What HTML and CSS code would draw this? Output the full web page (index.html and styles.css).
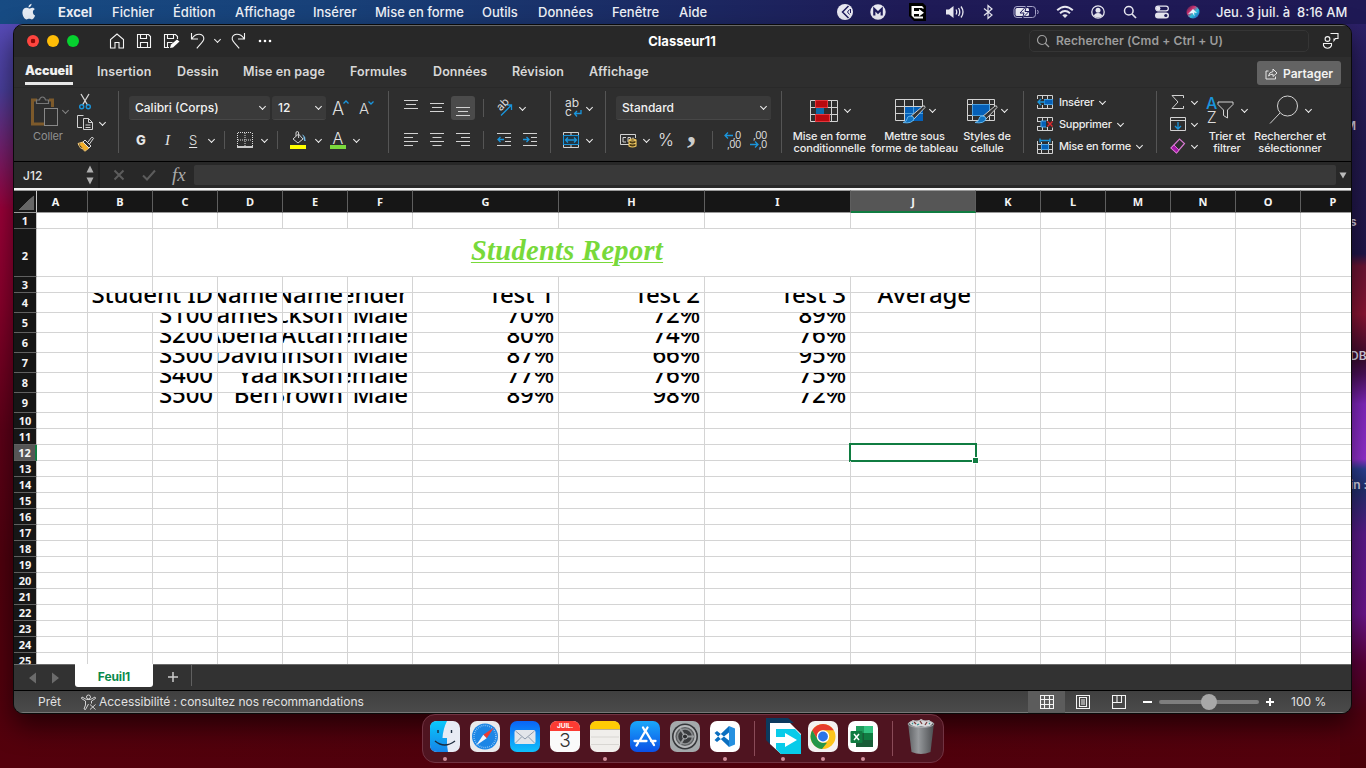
FILE: index.html
```html
<!DOCTYPE html>
<html lang="fr">
<head>
<meta charset="utf-8">
<title>Classeur11</title>
<link rel="stylesheet" href="styles.css">
</head>
<body>
<div class="desktop">
  <div class="wall-right"></div>
  <span class="desk-label l1">M</span><span class="desk-label l2">s</span><span class="desk-label l3">DB</span><span class="desk-label l4">in :</span>

  <header class="menubar">
    <svg class="apple" width="16" height="18" viewBox="0 0 16 18"><path fill="#e6ecf4" d="M10.6 0.8c.1 1.8-1.3 3.500-3.100 3.600C7.300 2.700 8.900 1 10.600.8zM13.700 6.200c-1.300.8-1.900 1.800-1.800 3.100 0 1.500.9 2.600 2.200 3.200-.5 1.500-1.700 3.800-3.200 3.900-1 0-1.400-.6-2.700-.6s-1.700.6-2.700.6C3.700 16.400 1.400 13 1.400 9.500c0-3 1.900-4.700 3.900-4.700 1.200 0 2 .7 2.900.7.900 0 1.800-.8 3.200-.8 1 0 1.800.5 2.300 1.500z"/></svg>
    <nav class="menus"><b>Excel</b><span>Fichier</span><span>Édition</span><span>Affichage</span><span>Insérer</span><span>Mise en forme</span><span>Outils</span><span>Données</span><span>Fenêtre</span><span>Aide</span></nav>
    <div class="tray">
      <svg width="18" height="18" viewBox="0 0 18 18"><circle cx="9" cy="9" r="8" fill="#e9e9f2"/><path d="M12.500 3L6.500 9l6 6" fill="none" stroke="#1f1c5c" stroke-width="1.500"/><path d="M13.500 6.500L11.500 9l2 2.500M14.500 6v4" fill="none" stroke="#1f1c5c" stroke-width="1"/></svg>
      <svg width="18" height="18" viewBox="0 0 18 18"><circle cx="9" cy="9" r="7.700" fill="#e9e9f2"/><path d="M5.300 12.500V6L9 9.600 12.700 6v6.500" fill="none" stroke="#1f1c5c" stroke-width="2.200"/></svg>
      <svg width="20" height="20" viewBox="0 0 20 20"><path d="M1 1h14l3 3v15H6l-5-5z" fill="#000"/><path d="M3.500 4H14l1.500 1.500V7l-2-1H6v3h5V7l5 3.700-5 3.800V12H6v2.500h9v2H6.500l-3-3z" fill="#fff"/></svg>
      <svg width="20" height="16" viewBox="0 0 20 16"><path d="M1 5.500h3L8.500 2v12L4 10.500H1z" fill="#e9e9f2"/><path d="M11 5.500q1.500 2.500 0 5M13.500 4q2.500 4 0 8M16 2.500q4 5.500 0 11" fill="none" stroke="#e9e9f2" stroke-width="1.300"/></svg>
      <svg width="12" height="16" viewBox="0 0 12 16"><path d="M2 4.500l8 6.500-4 3.500v-13L10 5l-8 6.500" fill="none" stroke="#e9e9f2" stroke-width="1.200"/></svg>
      <svg width="27" height="14" viewBox="0 0 27 14"><rect x="1" y="1.500" width="21.500" height="11" rx="3" fill="none" stroke="#a9a7cc" stroke-width="1"/><rect x="2.500" y="3" width="13.500" height="8" rx="1.500" fill="#e9e9f2"/><path d="M13.500 1L7 8h4l-1.500 5L16 6.500h-4z" fill="#e9e9f2" stroke="#1f1c5c" stroke-width="1"/><path d="M24.500 5q1.500 2 0 4" stroke="#a9a7cc" fill="none"/></svg>
      <svg width="18" height="14" viewBox="0 0 18 14"><path d="M1.200 5.200q7.800-7 15.600 0M4 8.200q5-4.400 10 0" fill="none" stroke="#e9e9f2" stroke-width="2"/><path d="M6.300 10.300q2.700-2 5.400 0L9 13z" fill="#e9e9f2"/></svg>
      <svg width="16" height="16" viewBox="0 0 16 16"><circle cx="8" cy="8" r="6.200" fill="none" stroke="#e9e9f2" stroke-width="1.300"/><circle cx="8" cy="6.200" r="2.500" fill="#e9e9f2"/><path d="M3.700 12q1-3 4.300-3t4.300 3Q8 15 3.700 12z" fill="#e9e9f2"/></svg>
      <svg width="14" height="14" viewBox="0 0 14 14"><circle cx="5.800" cy="5.800" r="4.300" fill="none" stroke="#e9e9f2" stroke-width="1.500"/><path d="M9 9l4 4" stroke="#e9e9f2" stroke-width="1.700"/></svg>
      <svg width="16" height="14" viewBox="0 0 16 14"><rect x="1.700" y="1.200" width="12.600" height="4.600" rx="2.300" fill="none" stroke="#e9e9f2" stroke-width="1.200"/><circle cx="4.200" cy="3.500" r="2.200" fill="#e9e9f2"/><rect x="1" y="7.500" width="14" height="6" rx="3" fill="#e9e9f2"/><circle cx="11.800" cy="10.500" r="1.600" fill="#1f1c5c"/></svg>
      <svg width="14" height="14" viewBox="0 0 14 14"><defs><linearGradient id="siri" x1="0" y1="0" x2="1" y2="1"><stop offset="0" stop-color="#14204a"/><stop offset=".35" stop-color="#d4306f"/><stop offset=".6" stop-color="#28c8e0"/><stop offset="1" stop-color="#2a3ab8"/></linearGradient></defs><circle cx="7" cy="7" r="6.500" fill="url(#siri)"/><path d="M2 9l5-5 4 4-3-.5.5 4-2-3.500z" fill="#e8f8ff"/></svg>
      <span class="clock">Jeu. 3 juil. à&nbsp; 8:16 AM</span>
    </div>
  </header>

  <main class="window">
    <div class="titlebar">
      <div class="lights"><i class="red"></i><i class="yellow"></i><i class="green"></i></div>
      <div class="quick">
        <svg width="16" height="16" viewBox="0 0 16 16"><path d="M1.500 15V6.500L8 1l6.500 5.500V15H10V9.500H6V15z" class="w"/></svg>
        <svg width="16" height="16" viewBox="0 0 16 16"><path d="M1.500 1.500h11l2 2v11h-13zM4.500 1.500v4h6v-4M4.500 14.500v-5h7v5" class="w"/></svg>
        <svg width="17" height="16" viewBox="0 0 17 16"><path d="M6 14.500H1.500v-13h11l2 2V6M4.500 1.500v4h6v-4M4.500 14.500v-5h5" class="w"/><path d="M7 15l1-3.500 6-5 2.500 2-6.500 6z" fill="#fff"/></svg>
        <svg width="16" height="18" viewBox="0 0 16 18"><path d="M1.500 1v6H8M2 6.500Q5 2 9.500 2.300 14 3 13.800 7c-.2 2.300-3 4.500-7 9.300" class="w"/></svg>
        <i class="chev"></i>
        <svg width="16" height="18" viewBox="0 0 16 18"><path d="M14.500 1v6H8M14 6.500Q11 2 6.500 2.300 2 3 2.200 7c.2 2.300 3 4.500 7 9.300" class="w"/></svg>
        <svg width="14" height="4" viewBox="0 0 14 4"><circle cx="2" cy="2" r="1.300" fill="#fff"/><circle cx="7" cy="2" r="1.300" fill="#fff"/><circle cx="12" cy="2" r="1.300" fill="#fff"/></svg>
      </div>
      <b class="doc">Classeur11</b>
      <div class="search"><svg width="14" height="14" viewBox="0 0 14 14"><circle cx="6" cy="6" r="4.500" fill="none" stroke="#a0a0a0" stroke-width="1.200"/><path d="M9 9l4 4" stroke="#a0a0a0" stroke-width="1.200"/></svg><span>Rechercher (Cmd + Ctrl + U)</span></div>
      <svg class="people" width="17" height="17" viewBox="0 0 17 17"><path d="M8.500 1.500h7.500v5h-2.500L12 8.500v-2M1.500 11.500h8v2q-1 2.700-4 2.700t-4-2.700z" class="w"/><circle cx="5.500" cy="7" r="2.400" class="w"/></svg>
    </div>

    <div class="tabs">
      <nav class="tablist"><b>Accueil</b><span>Insertion</span><span>Dessin</span><span>Mise en page</span><span>Formules</span><span>Données</span><span>Révision</span><span>Affichage</span></nav>
      <button class="share"><svg width="13" height="13" viewBox="0 0 13 13"><path d="M3.500 4H1v8h9.500V9.500M3.500 9q.5-4 4.500-4.500V2l4 4-4 3.500V7.200Q5.500 7 3.500 9z" fill="none" stroke="#e6e6e6"/></svg>Partager</button>
    </div>

    <section class="ribbon">
      <div class="group clip">
        <div class="paste">
          <div class="paste-top"><svg width="28" height="31" viewBox="0 0 28 31"><path d="M6 4H1.500v24H13M18 4h3.500v7" fill="none" stroke="#7d5a2b" stroke-width="3"/><path d="M5.500 7.500V4h3q.5-3 3-3t3 3h3v3.500z" fill="#2e2e2e" stroke="#777" stroke-width="1.200"/><rect x="13.500" y="12.500" width="13" height="17" fill="#2e2e2e" stroke="#888"/></svg><i class="chev dim"></i></div>
          <span>Coller</span>
        </div>
        <div class="clip-col">
          <svg width="16" height="18" viewBox="0 0 16 18"><path d="M4 1l6.500 11M12 1L5.500 12" stroke="#d8d8d8" stroke-width="1.300"/><circle cx="4.700" cy="13.700" r="2" fill="none" stroke="#1a95dc" stroke-width="1.400"/><circle cx="11.300" cy="13.700" r="2" fill="none" stroke="#1a95dc" stroke-width="1.400"/></svg>
          <div class="copy"><svg width="18" height="18" viewBox="0 0 18 18"><path d="M5 13.500H.5v-12h6M6.500 4.500h5l4 4v7h-9zM11.500 4.500v4h4M8.500 11h5M8.500 13.500h5" class="g"/></svg><i class="chev"></i></div>
          <svg width="18" height="16" viewBox="0 0 18 16"><path d="M2 8l4-2 6 6-4 3z" fill="#f2ad27"/><path d="M1 7.500l5-1.500 6 6-4 3.200Q6 14 5 12l-1 .5Q2.500 11 1 7.500z" fill="none" stroke="#f5cb78"/><path d="M6 6l2-2 6 6-2 2zM11 6l3.500-4.500q1.500-.5 2 .8L12.500 8" fill="#2e2e2e" stroke="#ddd"/></svg>
        </div>
      </div>

      <div class="group font">
        <div class="row r1"><div class="select">Calibri (Corps)<i class="chev"></i></div><div class="select">12<i class="chev"></i></div>
          <span class="ga big">A<svg width="6" height="4" viewBox="0 0 6 4"><path d="M.5 3.500L3 1l2.500 2.500" fill="none" stroke="#1a95dc" stroke-width="1.300"/></svg></span>
          <span class="ga">A<svg width="6" height="4" viewBox="0 0 6 4"><path d="M.5.5L3 3 5.500.5" fill="none" stroke="#1a95dc" stroke-width="1.300"/></svg></span></div>
        <div class="row r2"><b class="bold">G</b><span class="ital">I</span><span class="und">S</span><i class="chev"></i><i class="sep"></i>
          <svg width="16" height="16" viewBox="0 0 16 16"><path d="M1 .5h14M1 8h14M.5 1v13M8 1v13M15.500 1v13" stroke="#ddd" stroke-dasharray="1 1"/><path d="M0 15h16" stroke="#fff" stroke-width="1.600"/></svg><i class="chev"></i><i class="sep"></i>
          <svg width="17" height="18" viewBox="0 0 17 18"><path d="M3 8l5.500-5 4.500 5-5 4zM6 5V2q0-1.500 1.300-1.500T8.600 2v5" class="g"/><path d="M12.500 4q3 1 2.500 6-1.500-2-1-4" fill="#79bde8" stroke="#79bde8"/><path d="M0 14h16v4H0z" fill="#ff0"/></svg><i class="chev"></i>
          <span class="fontcolor">A</span><i class="chev"></i></div>
      </div>

      <div class="group align">
        <div class="row r3">
          <svg width="14" height="24" viewBox="0 0 14 24"><path d="M0 4.500h14M2 8.500h10M0 12.500h14" class="g"/></svg>
          <svg width="14" height="24" viewBox="0 0 14 24"><path d="M0 7.500h14M2 11.500h10M0 15.500h14" class="g"/></svg>
          <span class="on"><svg width="14" height="24" viewBox="0 0 14 24"><path d="M0 11.500h14M2 15.500h10M0 19.500h14" class="g"/></svg></span>
          <i class="sep"></i>
          <span class="orient"><em>ab</em><svg width="17" height="17" viewBox="0 0 17 17"><path d="M5 15.500L15.500 5M10.500 5h5v5" fill="none" stroke="#1a95dc" stroke-width="1.300"/></svg></span><i class="chev"></i></div>
        <div class="row r4">
          <svg width="14" height="14" viewBox="0 0 14 14"><path d="M0 .5h14M0 4.500h9M0 8.500h14M0 12.500h9" class="g"/></svg>
          <svg width="14" height="14" viewBox="0 0 14 14"><path d="M0 .5h14M2.500 4.500h9M0 8.500h14M2.500 12.500h9" class="g"/></svg>
          <svg width="14" height="14" viewBox="0 0 14 14"><path d="M0 .5h14M5 4.500h9M0 8.500h14M5 12.500h9" class="g"/></svg>
          <i class="sep"></i>
          <svg width="15" height="14" viewBox="0 0 15 14"><path d="M0 .5h14M8 4.500h6M8 8.500h6M0 12.500h14" class="g"/><path d="M7 6.500H1M3.500 4L1 6.500 3.500 9" class="bl"/></svg>
          <svg width="15" height="14" viewBox="0 0 15 14"><path d="M0 .5h14M8 4.500h6M8 8.500h6M0 12.500h14" class="g"/><path d="M0 6.500h6M3.500 4L6 6.500 3.500 9" class="bl"/></svg></div>
      </div>

      <div class="group wrap">
        <div class="row r5"><span class="abc">ab<br>c<svg width="9" height="8" viewBox="0 0 9 8"><path d="M8 0v3.500H1.500M4 1L1.500 3.500 4 6.500" class="bl"/></svg></span><i class="chev"></i></div>
        <div class="row r5"><svg width="16" height="16" viewBox="0 0 16 16"><path d="M.5.500h15v15H.5zM8 0v3.500M8 12.500V16" class="g"/><rect x=".5" y="3.500" width="15" height="9" fill="#22343f" stroke="#1a95dc"/><path d="M3 8h10M5 5.500L2.500 8 5 10.500M11 5.500L13.500 8 11 10.500" class="bl"/></svg><i class="chev"></i></div>
      </div>

      <div class="group number">
        <div class="row r6"><div class="select">Standard<i class="chev"></i></div></div>
        <div class="row r7">
          <svg width="18" height="16" viewBox="0 0 18 16"><path d="M9 12.500H.5v-10h15V6M6 5.500H3v4.500h3M8 10V5.500h2.500V8M13 5.500v2" class="g"/><path d="M9 8q3.500-2 7 0v6q-3.500 2-7 0zM9 8q3.500 2 7 0M9 11q3.500 2 7 0" fill="#4a3a14" stroke="#f5cb62" stroke-width="1.100"/></svg><i class="chev"></i>
          <span class="pct">%</span><span class="comma">,</span><i class="sep"></i>
          <span class="dec"><span><svg width="9" height="7" viewBox="0 0 9 7"><path d="M9 3.500H1M4 .5l-3 3 3 3" class="bl"/></svg>,0</span><span>,00</span></span>
          <span class="dec"><span>,00</span><span><svg width="9" height="7" viewBox="0 0 9 7"><path d="M0 3.500h8M5 .5l3 3-3 3" class="bl"/></svg>,0</span></span></div>
      </div>

      <div class="group styles">
        <div class="big-btn b1"><div class="big-ic"><svg width="29" height="27" viewBox="0 0 29 27"><path d="M.5 3.500h27v21H.5zM0 10.500h28M0 17.500h28M6.500 3v22M21.500 3v22" class="g"/><path d="M5.500 3.500h12v7h-12zM5.500 17.500h14v7h-14z" fill="#b8090f" stroke="#e4343a"/><path d="M6 11h8v6H6z" fill="#0b6aa8"/></svg><i class="chev"></i></div><span>Mise en forme<br>conditionnelle</span></div>
        <div class="big-btn b2"><div class="big-ic"><svg width="32" height="30" viewBox="0 -1 32 30"><path d="M.5 3.500h27v21H.5zM0 10.500h28M0 17.500h28M9.500 3v22M18.500 3v22" class="g"/><path d="M10 11h18v14H10z" fill="#0560b8"/><path d="M10 17.500h18M18.500 11v14" stroke="#4aa0e0"/><path d="M28 10q2-1 2 1.500L19 23l-4-2z" fill="#333" stroke="#ccc"/><path d="M15 20q4 0 4 3-2 5-11 3.500 4-1 4-3.500t3-3z" fill="#1173c0" stroke="#63b5ee"/></svg><i class="chev"></i></div><span>Mettre sous<br>forme de tableau</span></div>
        <div class="big-btn b3"><div class="big-ic"><svg width="32" height="30" viewBox="0 -1 32 30"><path d="M.5 3.500h27v21H.5zM0 8.500h28M0 19.500h28M5.500 3v22M22.500 3v22" class="g"/><path d="M5.500 8.500h17v11h-17z" fill="#0560b8" stroke="#4aa0e0"/><path d="M28 10q2-1 2 1.500L19 23l-4-2z" fill="#333" stroke="#ccc"/><path d="M15 20q4 0 4 3-2 5-11 3.500 4-1 4-3.500t3-3z" fill="#1173c0" stroke="#63b5ee"/></svg><i class="chev"></i></div><span>Styles de<br>cellule</span></div>
      </div>

      <div class="group cells">
        <div class="line"><svg width="16" height="14" viewBox="0 0 16 14"><path d="M.5 4V.5h15v13H.5V10M0 4.500h16M0 9.500h16M5.500 0v14M10.500 0v14" class="g"/><path d="M7 4.500h9v5H7z" fill="#0560b8" stroke="#4aa0e0"/><path d="M0 4h7v6H0z" fill="#2e2e2e"/><path d="M8 7H1.500M4 4L1 7l3 3" class="bl"/></svg>Insérer<i class="chev"></i></div>
        <div class="line"><svg width="16" height="14" viewBox="0 0 16 14"><path d="M.5 4V.500h15V4M.5 9.500v4h15v-3M0 4.500h5M0 9.500h5M5.500 0v14M10.500 0v14" class="g"/><path d="M4 4h6v6H4z" fill="#0560b8" stroke="#4aa0e0"/><path d="M9 4h7v6H9z" fill="#2e2e2e"/><path d="M10.500 4.500l5 5M15.500 4.500l-5 5" stroke="#e0282e" stroke-width="1.400"/></svg>Supprimer<i class="chev"></i></div>
        <div class="line"><svg width="16" height="16" viewBox="0 0 16 16"><path d="M.5 3v12.500h15V3M0 6.500h16M0 11.500h16M4.500 4v12M11.500 4v12" class="g"/><path d="M4.500 6.500h7v5h-7z" fill="#0560b8" stroke="#4aa0e0"/><path d="M3 2.500h10M3 .5v4M13 .5v4" class="bl"/></svg>Mise en forme<i class="chev"></i></div>
      </div>

      <div class="group edit">
        <div class="edit-col">
          <div><svg width="16" height="16" viewBox="0 0 16 16"><path d="M13.500 4V1.500H2L8 8l-6 6.500h11.500V12" class="g" stroke-width="1.300"/></svg><i class="chev"></i></div>
          <div><svg width="16" height="14" viewBox="0 0 16 14"><path d="M.5.500h15v13H.5zM0 3.500h16" class="g"/><path d="M8 5v7M5 9l3 3 3-3" class="bl"/></svg><i class="chev"></i></div>
          <div><svg width="16" height="16" viewBox="0 0 16 16"><path d="M1 10l8.500-9 5 4.500L6.500 15z" fill="none" stroke="#d678d0" stroke-width="1.200"/><path d="M1 10l3-3 5 5-2.500 3z" fill="#a51aa8" stroke="#d678d0"/></svg><i class="chev"></i></div>
        </div>
        <div class="big-btn b4"><div class="big-ic"><span class="az"><em>A</em><em>Z</em></span><svg width="17" height="18" viewBox="0 0 17 18"><path d="M1 1h15v2.500L10.500 9v8l-4-2.500V9L1 3.500z" class="g"/></svg><i class="chev"></i></div><span>Trier et<br>filtrer</span></div>
        <div class="big-btn b5"><div class="big-ic"><svg width="30" height="30" viewBox="0 0 30 30"><circle cx="18.500" cy="11" r="10" class="g"/><path d="M11 18L1 28.500" class="g" stroke-width="1.400"/></svg><i class="chev"></i></div><span>Rechercher et<br>sélectionner</span></div>
      </div>
    </section>

    <div class="formula">
      <span class="ref">J12</span>
      <svg width="8" height="20" viewBox="0 0 8 20"><path d="M.5 7.500L4 .5l3.500 7zM.5 12.500L4 19.500l3.500-7z" fill="#b0b0b0"/></svg>
      <i class="vbar"></i>
      <svg width="12" height="12" viewBox="0 0 12 12"><path d="M1.500 1.500l9 9M10.500 1.500l-9 9" stroke="#5c5c5c" stroke-width="2"/></svg>
      <svg width="14" height="12" viewBox="0 0 14 12"><path d="M1 6.500L5 10.500 13 1.500" fill="none" stroke="#5c5c5c" stroke-width="2"/></svg>
      <em class="fx">fx</em>
      <div class="input"></div>
      <svg class="drop" width="8" height="7" viewBox="0 0 8 7"><path d="M.5.500h7L4 6.500z" fill="#bbb"/></svg>
    </div>

    <section class="sheet" id="sheet"></section>

    <div class="sheetbar">
      <svg width="30" height="12" viewBox="0 0 30 12"><path d="M7 .5v11L0 6zM23 .5v11L30 6z" fill="#6b6b6b"/></svg>
      <div class="sheettab">Feuil1</div><div class="plus"><svg width="10" height="10" viewBox="0 0 10 10"><path d="M0 5h10M5 0v10" stroke="#ccc" stroke-width="1.500"/></svg></div>
    </div>
    <footer class="status">
      <span class="ready">Prêt</span>
      <svg width="16" height="16" viewBox="0 0 16 16"><circle cx="7.500" cy="3" r="2" class="g"/><path d="M1 3l4.500 2.500h4L14 3l.5 1.500L10.500 7v2.500M1 3L.5 4.500 4.500 7v4L3 15l1.500.5L7.500 10M9 10.500l5.500 5M14.500 10.500l-5.500 5" class="g"/></svg>
      <span class="access">Accessibilité : consultez nos recommandations</span>
      <span class="view on2"><svg width="14" height="14" viewBox="0 0 14 14"><path d="M.5.500h13v13H.5zM0 4.500h14M0 9.500h14M4.500 0v14M9.500 0v14" class="w"/></svg></span>
      <span class="view"><svg width="14" height="14" viewBox="0 0 14 14"><path d="M.5.500h13v13H.5zM3.500 2.500h7v9h-7zM5 5h4M5 7h4M5 9h4" class="w"/></svg></span>
      <span class="view"><svg width="14" height="14" viewBox="0 0 14 14"><path d="M.5.500h13v13H.5zM5 .5V7M.5 7.500h9v-7" class="w"/></svg></span>
      <i class="minus"></i><div class="slider"><i></i></div>
      <svg width="8" height="8" viewBox="0 0 8 8"><path d="M0 4h8M4 0v8" stroke="#fff" stroke-width="2"/></svg>
      <span class="zoom">100 %</span>
    </footer>
  </main>

  <div class="dock">
    <div class="app run"><svg width="30" height="31" viewBox="0 0 30 31"><defs><linearGradient id="fd" x1="0" y1="0" x2="0" y2="1"><stop offset="0" stop-color="#0ac8fb"/><stop offset="1" stop-color="#1584e8"/></linearGradient></defs><rect width="30" height="31" rx="7" fill="#e7ebf4"/><path d="M7 0h10q-4 8-4.500 17H17q-.5 7 1 14H7q-7 0-7-7V7q0-7 7-7z" fill="url(#fd)"/><path d="M8 9v3M21.500 9v3M5 20q9.500 8 20 0" fill="none" stroke="#1b2a3d" stroke-width="1.400"/></svg></div>
    <div class="app"><svg width="30" height="31" viewBox="0 0 30 31"><rect width="30" height="31" rx="7" fill="#e9eaec"/><circle cx="15" cy="15.500" r="13" fill="#1c86e6"/><circle cx="15" cy="15.500" r="11" fill="none" stroke="#a8d4f8" stroke-width="1.500" stroke-dasharray=".7 1.300"/><path d="M24 6.500L13.300 13.800l3.400 3.400z" fill="#ec3b32"/><path d="M6 24.500l7.300-10.700 3.400 3.400z" fill="#f4f6fa"/></svg></div>
    <div class="app"><svg width="30" height="31" viewBox="0 0 30 31"><defs><linearGradient id="ml" x1="0" y1="0" x2="0" y2="1"><stop offset="0" stop-color="#0a64f6"/><stop offset="1" stop-color="#0fc0fb"/></linearGradient></defs><rect width="30" height="31" rx="7" fill="url(#ml)"/><rect x="4.500" y="9" width="21" height="14" rx="2" fill="#e2e5ea"/><path d="M5.500 10l9.500 8 9.500-8M5.500 22l6-6M24.500 22l-6-6" fill="none" stroke="#8d9aab"/></svg></div>
    <div class="app cal"><b>JUIL.</b><span>3</span></div>
    <div class="app run"><svg width="30" height="31" viewBox="0 0 30 31"><rect width="30" height="31" rx="7" fill="#f0eeeb"/><path d="M7 0h16q7 0 7 7v1H0V7q0-7 7-7z" fill="#ffcb05"/><path d="M0 8.500h30" stroke="#b8b098"/><path d="M1 16h28M1 23.500h28" stroke="#d8d6d2"/></svg></div>
    <div class="app"><svg width="30" height="31" viewBox="0 0 30 31"><defs><linearGradient id="as" x1="0" y1="0" x2="0" y2="1"><stop offset="0" stop-color="#1aa8fa"/><stop offset="1" stop-color="#0b50e6"/></linearGradient></defs><rect width="30" height="31" rx="7" fill="url(#as)"/><path d="M13 6.500l2 3.500M17.500 6.500L9.500 20M4.500 20h12M16.500 11.500l7.500 12.500M21 20h4.500M8 22l-1.500 2.500" stroke="#fff" stroke-width="2.300" stroke-linecap="round"/></svg></div>
    <div class="app"><svg width="30" height="31" viewBox="0 0 30 31"><rect width="30" height="31" rx="7" fill="#a4a9ab"/><circle cx="15" cy="15.500" r="13" fill="#35373a"/><circle cx="15" cy="15.500" r="10.500" fill="#5c5f61" stroke="#b6b8ba" stroke-width="1.800"/><circle cx="15" cy="15.500" r="7.500" fill="#3b3d3f" stroke="#8b8e90" stroke-width="1.500"/><path d="M15 15.500h9.500M15 15.500L10.200 7.300M15 15.500l-4.800 8.200" stroke="#9a9d9f" stroke-width="1.800"/><circle cx="15" cy="15.500" r="2.500" fill="#2c2e30" stroke="#b0b2b4"/></svg></div>
    <div class="app run"><svg width="30" height="31" viewBox="0 0 30 31"><rect width="30" height="31" rx="7" fill="#fff"/><path d="M19 5l6 2.500v16L19 26z" fill="#2590e0"/><path d="M19 5v6.500L7 21l-2.500-2L17 7zM19 26v-6.500L7 10l-2.500 2L17 24z" fill="#0b6fc0"/></svg></div>
    <i class="dsep"></i>
    <div class="app run wide"><svg width="35" height="36" viewBox="0 0 35 36"><path d="M0 0h22l6 5H5v22L0 22z" fill="#0c3a5e"/><path d="M4 5h20l11 11v20H15L4 26z" fill="#fff"/><path d="M10 11h19l6 6v19H15l-5-5v-6h9v4l12-7-12-7v4h-9z" fill="#08cbe9"/></svg></div>
    <div class="app run"><svg width="30" height="31" viewBox="0 0 30 31"><rect width="30" height="31" rx="7" fill="#f4f2f2"/><circle cx="15" cy="15.500" r="12.500" fill="#fcc41c"/><path d="M4.200 9.300a12.500 12.500 0 0 1 21.600 0H15a6.200 6.200 0 0 0-5.400 3.100v6.200z" fill="#e63b2e"/><path d="M4.200 9.300L9.600 18.600A6.200 6.200 0 0 0 15 21.700h4L14 28A12.500 12.500 0 0 1 4.200 9.300z" fill="#23964a"/><circle cx="15" cy="15.500" r="6.200" fill="#fff"/><circle cx="15" cy="15.500" r="4.900" fill="#2b74e8"/></svg></div>
    <div class="app run xl"><svg width="30" height="31" viewBox="0 0 30 31"><rect width="30" height="31" rx="7" fill="#fff"/><path d="M8 5h9v21H8z" fill="#1f9d5d"/><path d="M16 5h9v7h-9z" fill="#33c481"/><path d="M16 12h9v7h-9z" fill="#107c41"/><path d="M8 12h8v14H8z" fill="#185c37"/><path d="M16 19h9v7h-9z" fill="#185c37"/><rect x="2.500" y="10" width="12" height="12" rx="1" fill="#107c41"/><path d="M6 13l5 6M11 13l-5 6" stroke="#fff" stroke-width="1.500"/></svg></div>
    <i class="dsep d2"></i>
    <div class="app trash"><svg width="28" height="36" viewBox="0 0 28 36"><defs><linearGradient id="tr"><stop offset="0" stop-color="#5f6164"/><stop offset=".4" stop-color="#96999c"/><stop offset="1" stop-color="#4b4d50"/></linearGradient></defs><path d="M1 4q13-4 26 0l-3.500 29q-9.500 4-19 0z" fill="url(#tr)"/><path d="M2 3.500L6 1l4 1.500L14 0l4 2 4-1 4 3-3 3-5 1-4-1-5 1-5-2z" fill="#d9dadc"/><path d="M7 3l2 2M13 2l2 3M20 3l-2 3" stroke="#7a3a3a" stroke-width="1.300"/><path d="M10 6l2-1M22 5l1-1M5 5l1-1" stroke="#2f8f90" stroke-width="1.300"/><ellipse cx="14" cy="5" rx="13" ry="3.500" fill="none" stroke="#aeb0b3" stroke-width=".8"/></svg></div>
  </div>
</div>
<script src="sheet.js"></script>
</body>
</html>
```
FILE: styles.css
```css
* { box-sizing: border-box; }
body { margin: 0; font-family: Inter, "Liberation Sans", sans-serif; font-size: 13px; color: #e6e6e6; }
svg { display: block; flex: none; }
.w { fill: none; stroke: #f4f4f4; stroke-width: 1.1; }
.g { fill: none; stroke: #d2d2d2; stroke-width: 1; }
.bl { fill: none; stroke: #1a95dc; stroke-width: 1.3; }
.chev { width: 5px; height: 5px; border: solid #f0f0f0; border-width: 0 1.8px 1.8px 0; transform: translateY(-1px) rotate(45deg); flex: none; }
.chev.dim { border-color: #858585; }
.sep { width: 1px; height: 18px; background: #555; }

.desktop { position: relative; width: 1366px; height: 768px; overflow: hidden;
  background: linear-gradient(90deg, rgba(0,0,0,0) 0, rgba(40,0,10,.15) 50%, rgba(0,0,0,0) 100%), linear-gradient(180deg, #564ab6 24px, #4a3f9c 90px, #75206d 150px, #9c0039 210px, #8a002c 300px, #5e0018 430px, #50000e 560px, #54000c 768px); }
.wall-right { position: absolute; left: 1340px; top: 24px; width: 26px; height: 744px;
  background: linear-gradient(180deg, #2c2068 0, #231a50 120px, #21164a 230px, #6c1433 242px, #8a1533 290px, #3a0c30 335px, #4a1058 350px, #8226c0 380px, #9330d0 435px, #2b3f94 445px, #21306e 465px, #5a1a8a 510px, #6c148c 590px, #5a0038 640px, #500010 690px, #4a0008 744px); }
.desk-label { position: absolute; font-size: 12px; font-weight: 600; color: #dcd8ea; white-space: nowrap; }
.l1 { left: 1345px; top: 118px; } .l2 { left: 1350px; top: 214px; } .l3 { left: 1350px; top: 348px; } .l4 { left: 1350px; top: 477px; }

.menubar { position: relative; height: 24px; display: flex; align-items: center; padding-left: 21px; background: linear-gradient(90deg, #174b83 0, #184078 25%, #1b2a63 48%, #1f1b57 66%, #1f1955 100%); color: #eef1f7; }
.menus { display: grid; grid-template-columns: 54px 61px 62px 78px 62px 107px 56px 74px 67px 60px; padding-left: 21px; font-weight: 500; white-space: nowrap; }
.menus b { font-weight: 700; }
.tray { margin-left: 97px; display: grid; align-items: center; grid-template-columns: 33px 39px 37px 37px 31px 43px 34px 33px 31px 32px 30px 140px; font-weight: 500; white-space: nowrap; }

.window { position: relative; margin-left: 13px; width: 1339px; height: 690px; border: 1px solid #0a0a0a; border-radius: 10px; overflow: hidden; background: #2e2e2e; box-shadow: 0 12px 26px rgba(0,0,0,.55); }
.titlebar { height: 32px; background: #282828; border-top: 1px solid #686868; display: flex; align-items: center; padding: 0 0 2px 13px; }
.lights { display: flex; gap: 8px; width: 81px; }
.lights i { width: 12px; height: 12px; border-radius: 50%; display: block; }
.red { background: radial-gradient(circle, #8c0a06 0 2px, #ff453f 2.6px); } .yellow { background: #ffbd07; } .green { background: #06d22f; }
.quick { display: grid; grid-template-columns: 27px 27px 27px 25px 15px 28px 20px; align-items: center; padding-left: 1px; width: 200px; }
.doc { width: 280px; margin-left: 234px; text-align: center; color: #fff; font-weight: 700; }
.search { width: 280px; height: 22px; margin-left: 207px; border: 1px solid #353535; border-radius: 5px; display: flex; align-items: center; padding-left: 6px; gap: 6px; color: #9c9c9c; font-weight: 600; font-size: 12px; letter-spacing: .1px; }
.people { margin-left: 13px; }

.tabs { height: 31px; display: flex; justify-content: space-between; padding: 0 10px 0 11px; border-bottom: 1px solid #292929; }
.tablist { display: grid; grid-template-columns: 72px 80px 66px 107px 83px 79px 77px 80px; align-items: center; font-size: 12.5px; font-weight: 600; color: #d8d8d8; justify-items: start; white-space: nowrap; margin-top: -1px; }
.tablist span { letter-spacing: .1px; }
.tablist b { color: #f0f0f0; border-bottom: 3px solid #e8e8e8; padding: 5px 0 4px; line-height: 15px; }
.share { margin-top: 4px; width: 84px; height: 24px; border: 0; border-radius: 3px; background: #636363; color: #f2f2f2; font: 600 12px Inter, sans-serif; display: flex; align-items: center; gap: 5px; padding: 0 0 0 8px; }

.ribbon { height: 74px; display: flex; border-bottom: 1px solid #000; }
.group { height: 73px; padding-top: 8px; display: flex; flex-direction: column; gap: 8px; flex: none; background: linear-gradient(#555,#555) right 0 top 3px / 1px 62px no-repeat; }
.row { height: 24px; display: grid; align-items: center; justify-items: start; }
.select { height: 24px; width: 100%; border-radius: 3px; background: #3a3a3a; border-bottom: 1px solid #474747; color: #f2f2f2; display: flex; align-items: center; justify-content: space-between; padding: 0 5px 0 6px; font-size: 12px; font-weight: 500; }
.clip { width: 105px; flex-direction: row; gap: 0; padding-left: 17px; }
.paste { width: 46px; font-size: 11px; color: #909090; }
.paste-top { display: flex; align-items: center; gap: 4px; height: 31px; }
.paste > span { display: block; margin: 2px 0 0 2px; letter-spacing: -.1px; }
.clip-col { display: flex; flex-direction: column; align-items: flex-start; margin-top: -3px; gap: 4px; }
.copy { display: flex; align-items: center; gap: 5px; margin-top: -1px; }
.font { width: 270px; padding-left: 10px; }
.r1 { column-gap: 2px; grid-template-columns: 141px 54px 28px 20px; }
.ga { font: 300 15px Inter; color: #ddd; display: flex; padding-left: 1px; } .ga svg { margin-top: 2px; margin-left: -1px; }
.ga.big { font-size: 18px; padding-left: 4px; }
.r2 { grid-template-columns: 31px 26px 18px 14px 13px 25px 15px 13px 26px 14px 24px 10px; padding-left: 6px; font-size: 14px; }
.bold { font-weight: 800; font-size: 13px; margin-left: 1px; } .ital { font: italic 15px "Liberation Serif"; margin-left: -1px; } .und { text-decoration: underline; text-underline-offset: 2px; font-weight: 300; margin-left: -3px; font-size: 13px; }
.r2 .und + .chev { margin-left: -1px; }
.fontcolor { font-size: 16px; line-height: 14px; width: 16px; height: 18px; text-align: center; border-bottom: 4px solid #7bd93c; font-weight: 300; }
.align { width: 162px; padding-left: 15px; }
.r3 { grid-template-columns: 26px 26px 27px 13px 24px 10px; } .r3 .on { margin-left: -5px; width: 24px; padding-left: 5px; border-radius: 3px; background: #4b4b4b; }
.orient { position: relative; width: 17px; height: 17px; } .orient em { position: absolute; left: 0; top: -3px; font: 11px Inter; transform: rotate(-45deg); color: #ddd; }
.r4 { grid-template-columns: 26px 26px 27px 14px 26px 15px; }
.wrap { width: 55px; padding-left: 12px; } .r5 { grid-template-columns: 24px 8px; }
.abc { font-size: 12px; line-height: 9px; color: #ddd; padding-left: 2px; } .abc svg { display: inline-block; vertical-align: -2px; margin-left: 1px; }
.number { width: 176px; padding-left: 10px; } .r6 { grid-template-columns: 155px; }
.r7 { grid-template-columns: 24px 14px 29px 25px 12px 26px 18px; grid-template-rows: 24px; padding-left: 4px; }
.pct { font: 300 17px Inter; } .comma { font: 700 36px/5px "Liberation Serif"; height: 24px; color: #ccc; }
.dec { font-size: 10px; line-height: 9px; width: 17px; display: flex; flex-direction: column; align-items: flex-end; letter-spacing: -.4px; color: #ddd; } .dec span { display: flex; align-items: center; }
.styles { width: 242px; padding: 8px 0 0 10px; flex-direction: row; gap: 0; }
.big-btn { text-align: center; font-size: 11px; line-height: 12px; font-weight: 500; letter-spacing: -.15px; color: #ececec; white-space: nowrap; display: flex; flex-direction: column; align-items: center; }
.big-ic { height: 28px; margin-bottom: 6px; display: flex; align-items: center; gap: 6px; align-self: flex-start; letter-spacing: 0; }
.b1 { width: 75px; } .b2 { width: 95px; } .b3 { width: 50px; }
.b1 .big-ic { padding-left: 18px; } .b2 .big-ic, .b3 .big-ic { gap: 3px; } .b2 .big-ic { padding-left: 28px; } .b3 .big-ic { padding-left: 5px; }
.cells { width: 133px; padding: 3px 0 0 13px; gap: 0; }
.line { height: 22px; display: flex; align-items: center; gap: 6px; font-size: 11px; font-weight: 500; letter-spacing: -.25px; color: #ececec; }
.edit { width: 194px; padding: 3px 0 0 13px; flex-direction: row; gap: 0; background: none; }
.edit-col { width: 35px; } .edit-col div { height: 22px; display: flex; align-items: center; gap: 6px; }
.edit .big-btn { padding-top: 5px; }
.b4 { width: 44px; } .b5 { width: 82px; } .b4 .big-ic { gap: 0; padding-left: 1px; } .b4 .chev { margin-left: 8px; }
.az em { display: block; font: 300 16px/14px Inter; color: #ddd; } .az em:first-child { color: #1a95dc; font-weight: 500; }
.b5 .big-ic { padding-left: 20px; gap: 7px; }

.formula { height: 26px; background: #282828; display: flex; align-items: center; padding-left: 9px; }
.ref { width: 63px; font-size: 12px; font-weight: 500; }
.vbar { width: 2px; height: 26px; background: #1f1f1f; margin: 0 13px 0 4px; } .formula .vbar + svg { margin-right: 17px; }
.fx { font: italic 19px "Liberation Serif"; color: #aaa; margin: 0 6px 0 16px; width: 16px; }
.input { height: 20px; width: 1142px; background: #393939; border-radius: 2px; } .formula .drop { margin-left: 3px; }

.sheet { height: 476px; overflow: hidden; background: #fff; border-top: 2px solid #f4f4f4; }
.srow { display: grid; grid-template-columns: 23px 51px repeat(5, 65px) 146px 146px 146px 125px repeat(6, 65px); }
.cell { border-right: 1px solid #d4d4d4; border-bottom: 1px solid #d4d4d4; overflow: hidden; position: relative; display: flex; justify-content: flex-end; color: #000; font: 500 24px/26px "Noto Sans", sans-serif; white-space: nowrap; }
.cell span { margin-top: -12px; padding-right: 4px; letter-spacing: -.1px; }
.rh, .ch { font: 700 11px "Noto Sans", sans-serif; color: #f4f4f4; background: #161616; display: flex; align-items: center; justify-content: center; overflow: hidden; }
.ch { border-right: 1px solid #5e5e5e; border-bottom: 1px solid #9a9a9a; border-top: 1px solid #999; }
.corner + .ch { padding-right: 13px; }
.rh { border-bottom: 1px solid #606060; border-right: 1px solid #c9c9c9; }
.rh.tall { padding-top: 6px; }
.ch.sel { background: #565656; border-bottom: 2px solid #107c41; } .rh.sel { background: #565656; border-right: 2px solid #107c41; }
.corner { background: linear-gradient(to bottom right, transparent 50%, #666 51%) 4px 4px / 16px 15px no-repeat #161616; border-top: 1px solid #999; border-right: 1px solid #c9c9c9; border-bottom: 1px solid #9a9a9a; }
.title { grid-column: span 8; justify-content: center; }
.title b { font: italic 700 28.5px/30px "Liberation Serif"; color: #78d93a; text-decoration: underline; text-decoration-thickness: 1px; text-underline-offset: 2px; margin: 7px 0 0 6px; letter-spacing: .3px; }
.active { position: relative; overflow: visible; }
.active::after { content: ""; position: absolute; inset: -2px -2px -2px -2px; border: 2px solid #107c41; }
.active::before { content: ""; position: absolute; right: -3px; bottom: -3px; width: 5px; height: 5px; background: #107c41; outline: 1px solid #fff; z-index: 2; }

.sheetbar { height: 27px; background: #323232; border-top: 1px solid #6a6a6a; border-bottom: 1px solid #000; display: flex; padding-left: 15px; }
.sheetbar > svg { width: 30px; margin: 7px 16px 0 0; }
.sheettab { width: 78px; height: 23px; margin-top: -1px; background: #fff; border-radius: 0 0 3px 3px; color: #0a8a4c; font-weight: 700; font-size: 12px; text-align: center; line-height: 25px; letter-spacing: -.1px; }
.plus { width: 39px; height: 21px; border-right: 1px solid #606060; display: flex; padding: 7px 0 0 15px; }
.status { height: 22px; display: flex; align-items: center; background: linear-gradient(#404040, #4a4a4a); border-bottom: 1px solid #777; font-size: 12px; color: #e2e2e2; }
.ready { margin-left: 24px; width: 43px; } .access { margin-left: 2px; width: 929px; letter-spacing: -.02px; white-space: nowrap; }
.view { width: 36px; height: 22px; display: grid; place-items: center; flex: none; } .on2 { background: #5c5c5c; width: 37px; }
.minus { width: 9px; height: 2px; background: #fff; margin: 0 7px 0 6px; flex: none; }
.slider { width: 100px; height: 4px; border-radius: 2px; background: #7e7e7e; position: relative; margin-right: 7px; flex: none; } .slider i { position: absolute; left: 42px; top: -6px; width: 16px; height: 16px; border-radius: 50%; background: #a8a8a8; }
.zoom { margin-left: 17px; white-space: nowrap; }

.dock { position: relative; margin: 0 0 0 422px; width: 522px; height: 49px; border: 1px solid #713342; border-radius: 13px; background: #4f1420; display: flex; gap: 10px; padding: 6px 0 0 7px; }
.app { position: relative; width: 30px; height: 31px; flex: none; }
.run::after { content: ""; position: absolute; left: 13px; top: 36px; width: 4px; height: 4px; border-radius: 50%; background: #d18e9b; }
.cal { border-radius: 7px; overflow: hidden; background: #fafafa; color: #333; text-align: center; display: flex; flex-direction: column; }
.cal b { background: #fb3b33; color: #fff; font-size: 6.500px; line-height: 10px; height: 10px; } .cal span { font-size: 19px; line-height: 20px; font-weight: 300; }
.dsep { width: 1px; height: 35px; background: #8a4b58; margin: 0 1px 0 4px; }
.dsep.d2 { margin: 0 4px 0 4px; }
.wide { width: 35px; margin: -3px -3px 0 0; } .wide::after { left: 15px; top: 39px; }
.trash { margin-top: -2px; }
```
FILE: sheet.js
```js
const columns = ['A','B','C','D','E','F','G','H','I','J','K','L','M','N','O','P'];
const heights = [16, 48, 16, 20, 20, 20, 20, 20, 20];
const values = {
  4: ['', 'Student ID', 'First Name', 'Last Name', 'Gender', 'Test 1', 'Test 2', 'Test 3', 'Average'],
  5: ['', '', 'S100', 'James', 'Jackson', 'Male', '70%', '72%', '89%'],
  6: ['', '', 'S200', 'Abena', 'Attah', 'Female', '80%', '74%', '76%'],
  7: ['', '', 'S300', 'David', 'Robinson', 'Male', '87%', '66%', '95%'],
  8: ['', '', 'S400', 'Yaa', 'Yankson', 'Female', '77%', '76%', '75%'],
  9: ['', '', 'S500', 'Ben', 'Brown', 'Male', '89%', '98%', '72%']
};
const sheet = document.getElementById('sheet');

function add(parent, cls, text) {
  const el = document.createElement('div');
  el.className = cls;
  if (text) el.innerHTML = text;
  parent.appendChild(el);
  return el;
}

const head = add(sheet, 'srow');
head.style.height = '23px';
add(head, 'corner');
columns.forEach(c => add(head, c === 'J' ? 'ch sel' : 'ch', c));

for (let r = 1; r <= 25; r++) {
  const row = add(sheet, 'srow');
  row.style.height = (heights[r - 1] || 16) + 'px';
  add(row, 'rh' + (r === 12 ? ' sel' : '') + (r === 2 ? ' tall' : ''), String(r));
  for (let c = 0; c < columns.length; c++) {
    if (r === 2 && c === 2) {
      add(row, 'cell title', '<b>Students Report</b>');
      c = 9;
      continue;
    }
    const text = values[r] && values[r][c];
    const el = add(row, 'cell' + (r === 12 && c === 9 ? ' active' : ''), text ? '<span>' + text + '</span>' : '');
    if (r === 4 && c === 1) {
      el.style.gridColumn = 'span 2';
    }
  }
  if (r === 4) row.lastChild.remove();
}
```
